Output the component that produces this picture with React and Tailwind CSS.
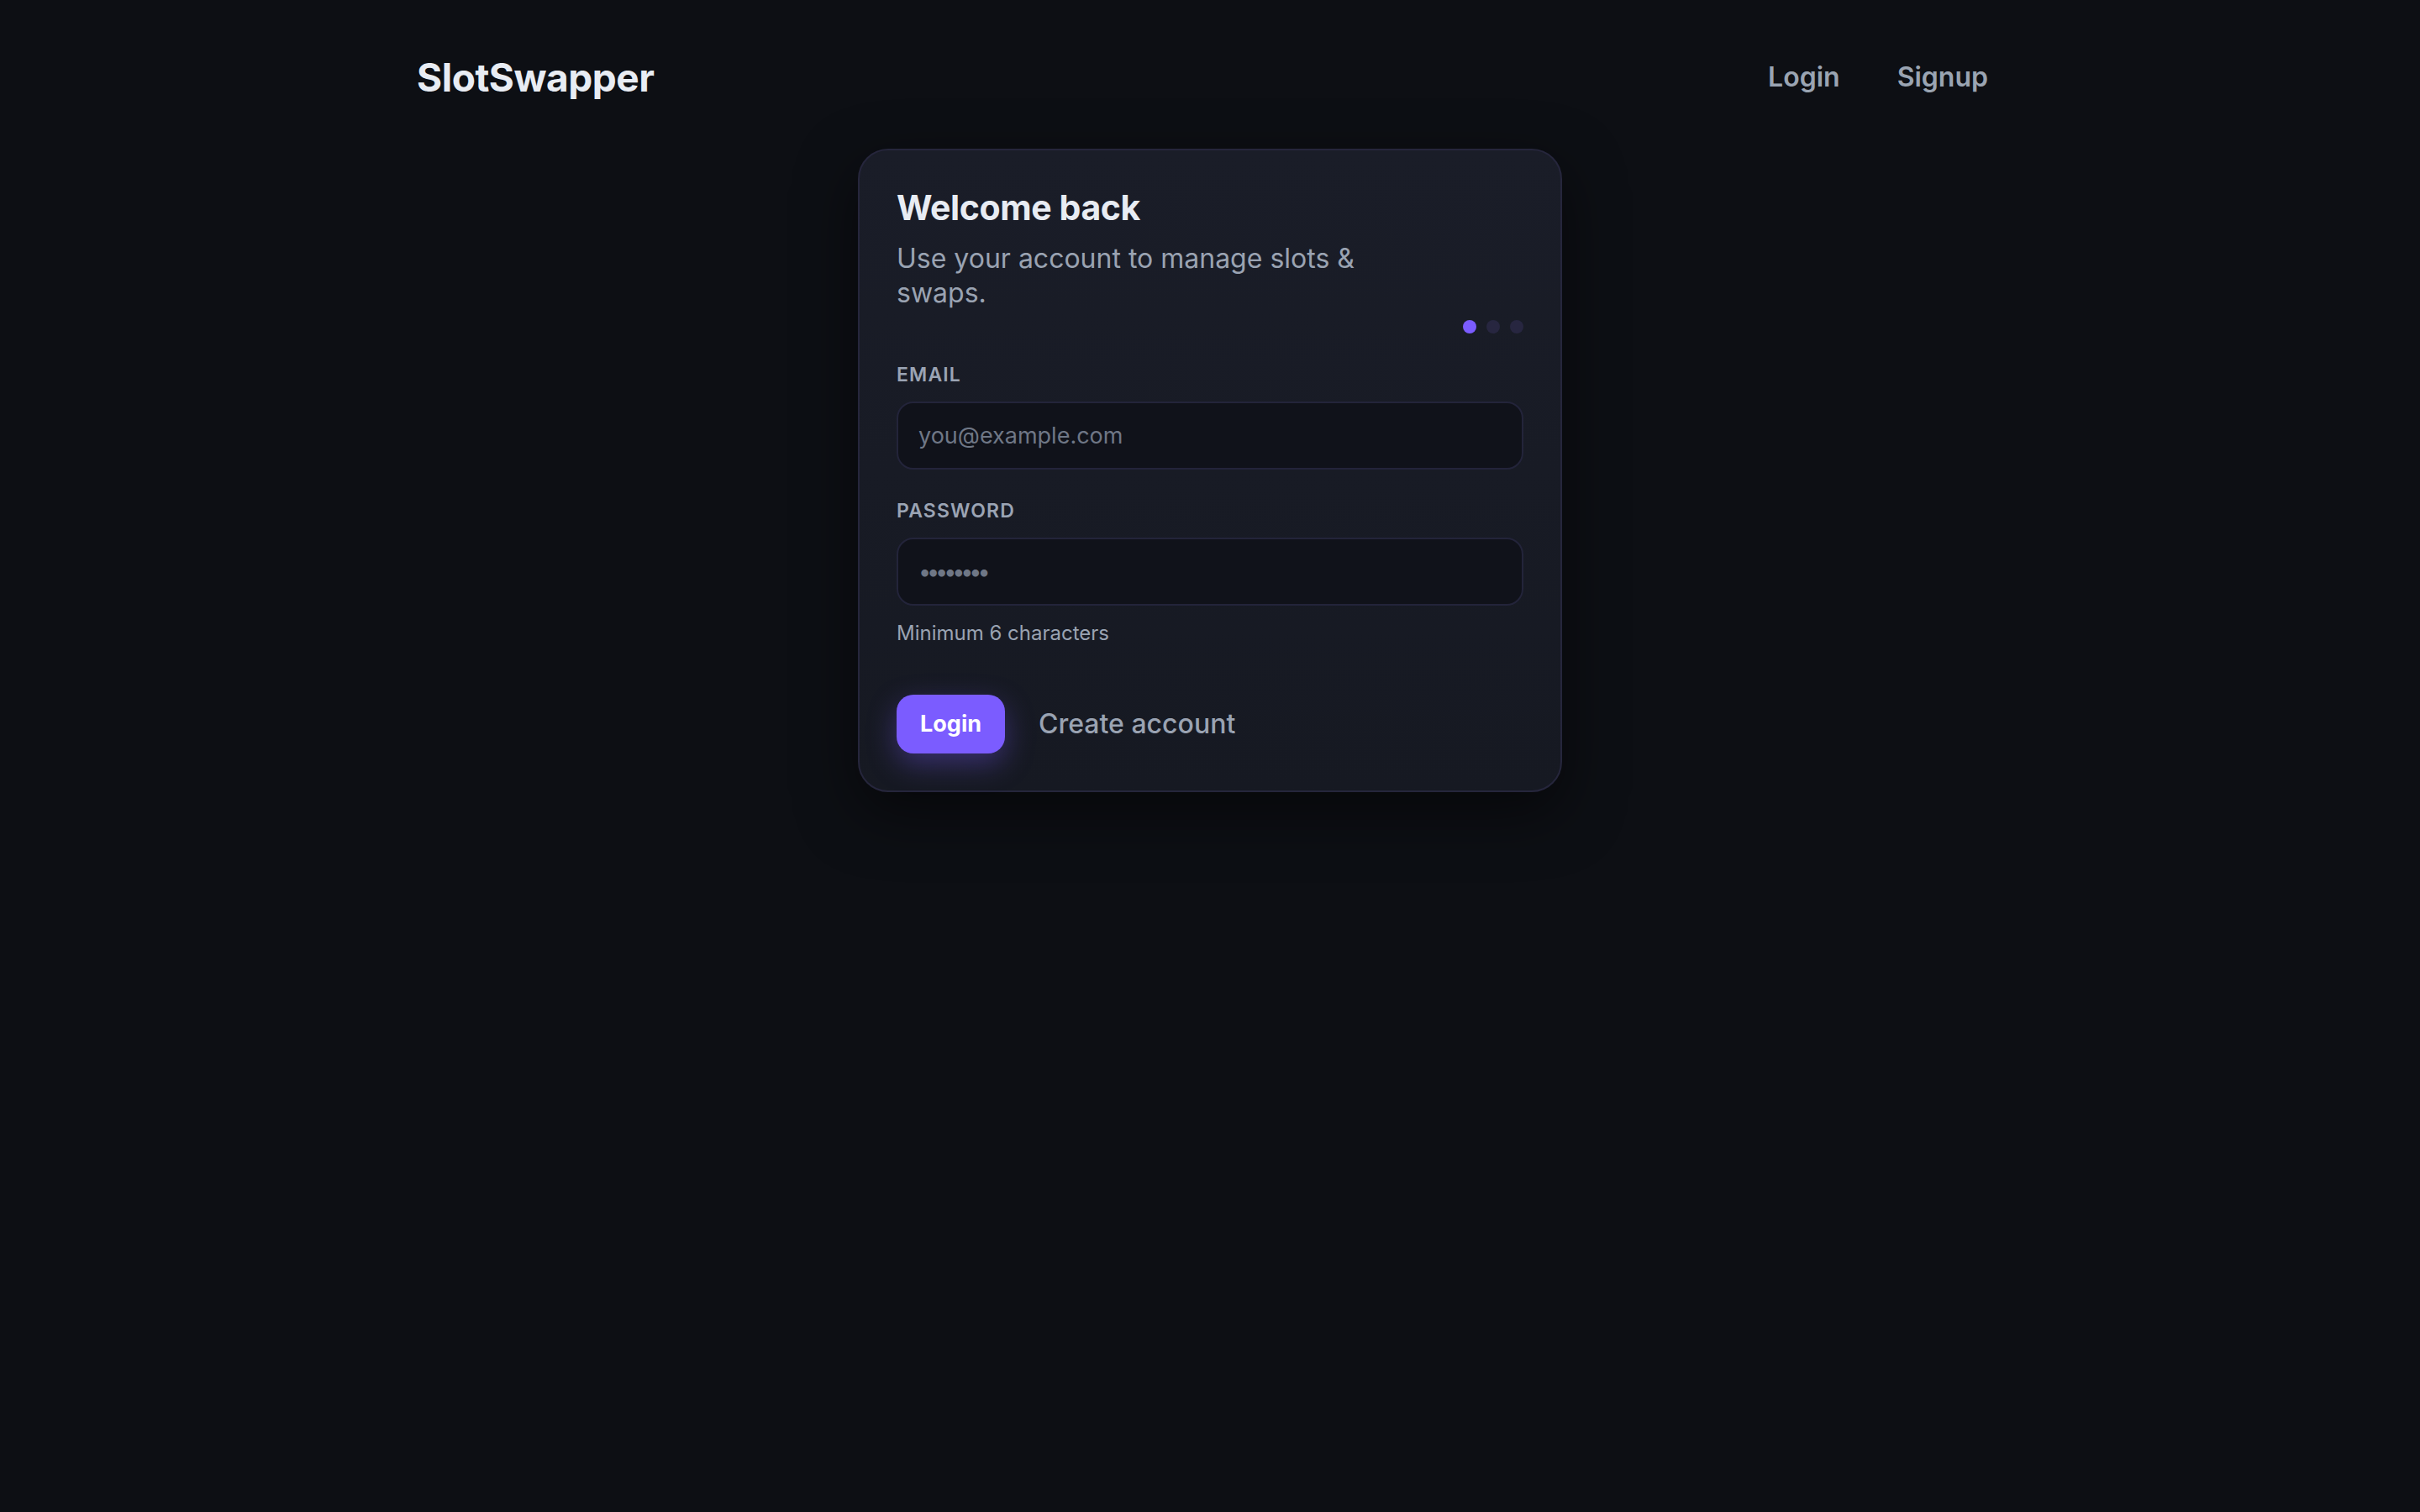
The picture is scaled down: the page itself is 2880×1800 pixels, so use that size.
import React from "react";

function Header() {
  return (
    <header className="mx-auto flex h-[104px] w-[1888px] items-center justify-between">
      <div className="text-[46px] font-bold leading-[54px] tracking-[-0.01em] text-[#e8ecf3]">
        SlotSwapper
      </div>
      <nav className="flex items-center gap-[32px]">
        <a className="px-[18px] text-[32px] font-semibold leading-[40px] text-[#9aa4b2]">Login</a>
        <a className="px-[18px] text-[32px] font-semibold leading-[40px] text-[#9aa4b2]">Signup</a>
      </nav>
    </header>
  );
}

function Field({ label, type, placeholder, inputClass = "" }) {
  return (
    <div>
      <label className="block text-[23px] font-semibold uppercase leading-[28px] tracking-[0.05em] text-[#9ba4b4]">
        {label}
      </label>
      <input
        type={type}
        placeholder={placeholder}
        className={
          "mt-[18px] block h-[81px] w-full rounded-[20px] border-2 border-[#23243a] bg-[#10121a] px-[24px] text-[27px] text-[#e8ecf3] outline-none placeholder:text-[#6f7786] " +
          inputClass
        }
      />
    </div>
  );
}

function LoginCard() {
  return (
    <div className="mx-auto w-[838px] rounded-[36px] border-2 border-[#26263c] bg-linear-to-b from-[#1a1d28] to-[#161922] p-[44px] shadow-[0_24px_70px_rgba(0,0,0,0.5)]">
      <h1 className="text-[41px] font-bold leading-[48px] tracking-[-0.01em] text-[#e8ecf3]">Welcome back</h1>
      <p className="mt-[16px] max-w-[600px] text-[32px] leading-[41px] text-[#9aa3b2]">
        Use your account to manage slots &amp; swaps.
      </p>
      <div className="mt-[12px] flex justify-end gap-[12px]">
        <span className="h-[16px] w-[16px] rounded-full bg-[#7b5cff]" />
        <span className="h-[16px] w-[16px] rounded-full bg-[#272640]" />
        <span className="h-[16px] w-[16px] rounded-full bg-[#272640]" />
      </div>

      <div className="mt-[35px]">
        <Field label="Email" type="email" placeholder="you@example.com" />
      </div>
      <div className="mt-[35px]">
        <Field
          label="Password"
          type="password"
          placeholder="••••••••"
          inputClass="tracking-[-0.19em] placeholder:text-[#6f7a88]"
        />
      </div>
      <p className="mt-[17px] text-[24px] leading-[32px] text-[#9aa3b2]">Minimum 6 characters</p>

      <div className="mt-[57px] flex items-center gap-[40px]">
        <button className="h-[70px] rounded-[20px] bg-[#7b5cff] px-[28px] text-[27px] font-bold text-white shadow-[0_12px_34px_rgba(123,92,255,0.35)]">
          Login
        </button>
        <a className="text-[32px] font-medium text-[#9aa3b2]">Create account</a>
      </div>
    </div>
  );
}

export default function App() {
  return (
    <div className="min-h-screen bg-[#0d0f14] pt-[40px] font-['Inter',sans-serif]">
      <Header />
      <main className="mt-[33px] pb-[80px]">
        <LoginCard />
      </main>
    </div>
  );
}
